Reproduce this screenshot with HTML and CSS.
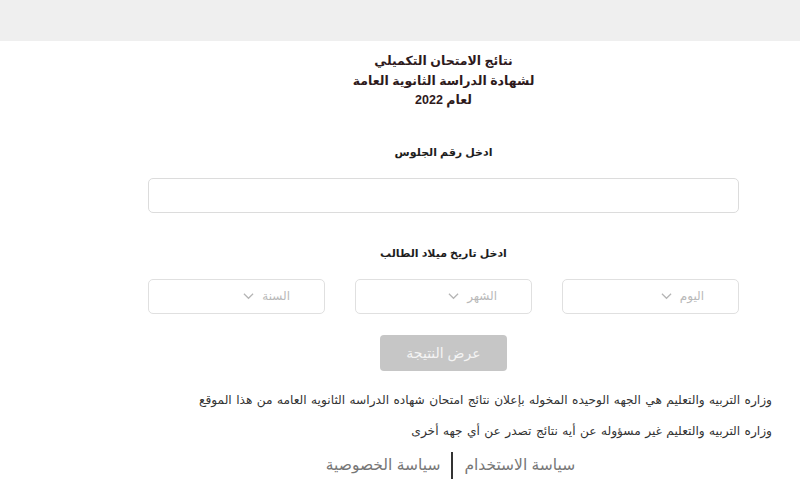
FILE: index.html
```html
<!DOCTYPE html>
<html lang="ar" dir="rtl">
<head>
<meta charset="utf-8">
<title>نتائج الامتحان التكميلي</title>
<link rel="stylesheet" href="styles.css">
</head>
<body>
<header class="topbar"></header>

<main class="card">
  <h1 class="title">
    <span>نتائج الامتحان التكميلي</span>
    <span>لشهادة الدراسة الثانوية العامة</span>
    <span>لعام 2022</span>
  </h1>

  <label class="field-label" for="seat">ادخل رقم الجلوس</label>
  <input class="text-input" id="seat" type="text">

  <div class="field-label label-date">ادخل تاريخ ميلاد الطالب</div>
  <div class="date-row">
    <div class="select"><span>اليوم</span><svg class="chev" viewBox="0 0 12 8"><path d="M1 1.5 6 6.5 11 1.5"/></svg></div>
    <div class="select"><span>الشهر</span><svg class="chev" viewBox="0 0 12 8"><path d="M1 1.5 6 6.5 11 1.5"/></svg></div>
    <div class="select"><span>السنة</span><svg class="chev" viewBox="0 0 12 8"><path d="M1 1.5 6 6.5 11 1.5"/></svg></div>
  </div>

  <button class="submit" type="button">عرض النتيجة</button>
</main>

<section class="notes">
  <p>وزاره التربيه والتعليم هي الجهه الوحيده المخوله بإعلان نتائج امتحان شهاده الدراسه الثانويه العامه من هذا الموقع</p>
  <p>وزاره التربيه والتعليم غير مسؤوله عن أيه نتائج تصدر عن أي جهه أخرى</p>
</section>

<footer class="links">
  <a href="#">سياسة الاستخدام</a>
  <span class="sep"></span>
  <a href="#">سياسة الخصوصية</a>
</footer>
</body>
</html>
```

FILE: styles.css
```css
* { box-sizing: border-box; }

body {
  margin: 0;
  background: #fff;
  font-family: "Liberation Sans", "DejaVu Sans", sans-serif;
  color: #222;
}

.topbar {
  height: 41px;
  background: #efefef;
}

/* centred column of the form, offset like the site's layout */
.card,
.links {
  width: 591px;
  margin-left: 148px;
  margin-right: auto;
}

.card {
  display: flex;
  flex-direction: column;
  align-items: center;
  text-align: center;
}

.title {
  margin: 11px 0 0;
  display: flex;
  flex-direction: column;
  font-size: 12.5px;
  line-height: 19.5px;
  font-weight: bold;
  color: #2e1a1c;
}

.field-label {
  margin-top: 33px;
  font-size: 11px;
  font-weight: bold;
  line-height: 16px;
  color: #1e1e1e;
}

.label-date { margin-top: 32px; }

.text-input {
  margin-top: 18px;
  width: 100%;
  height: 35px;
  border: 1px solid #dcdcdc;
  border-radius: 5px;
  background: #fff;
  outline: none;
}

.date-row {
  margin-top: 18px;
  width: 100%;
  display: flex;
  justify-content: space-between;
}

.select {
  width: 177px;
  height: 35px;
  border: 1px solid #e0e0e0;
  border-radius: 5px;
  display: flex;
  align-items: center;
  gap: 8px;
  padding-right: 34px;
  font-size: 12px;
  color: #b9b9b9;
}

.chev {
  width: 11px;
  height: 8px;
  fill: none;
  stroke: #b5b5b5;
  stroke-width: 1.3;
}

.submit {
  margin-top: 21px;
  width: 127px;
  height: 36px;
  border: none;
  border-radius: 4px;
  background: #c6c6c6;
  color: #f4f4f4;
  font-family: inherit;
  font-size: 14px;
}

.notes {
  margin-top: 14px;
  padding-right: 28px;
  text-align: right;
  font-size: 12.2px;
  word-spacing: 1px;
  color: #333;
}

.notes p {
  margin: 0;
  line-height: 31px;
}

.links {
  margin-top: 5px;
  padding-left: 14px;
  display: flex;
  justify-content: center;
  align-items: center;
  gap: 11px;
}

.links a {
  color: #777;
  text-decoration: none;
  font-size: 15.5px;
}

.sep {
  width: 2px;
  height: 27px;
  background: #333;
}
```
